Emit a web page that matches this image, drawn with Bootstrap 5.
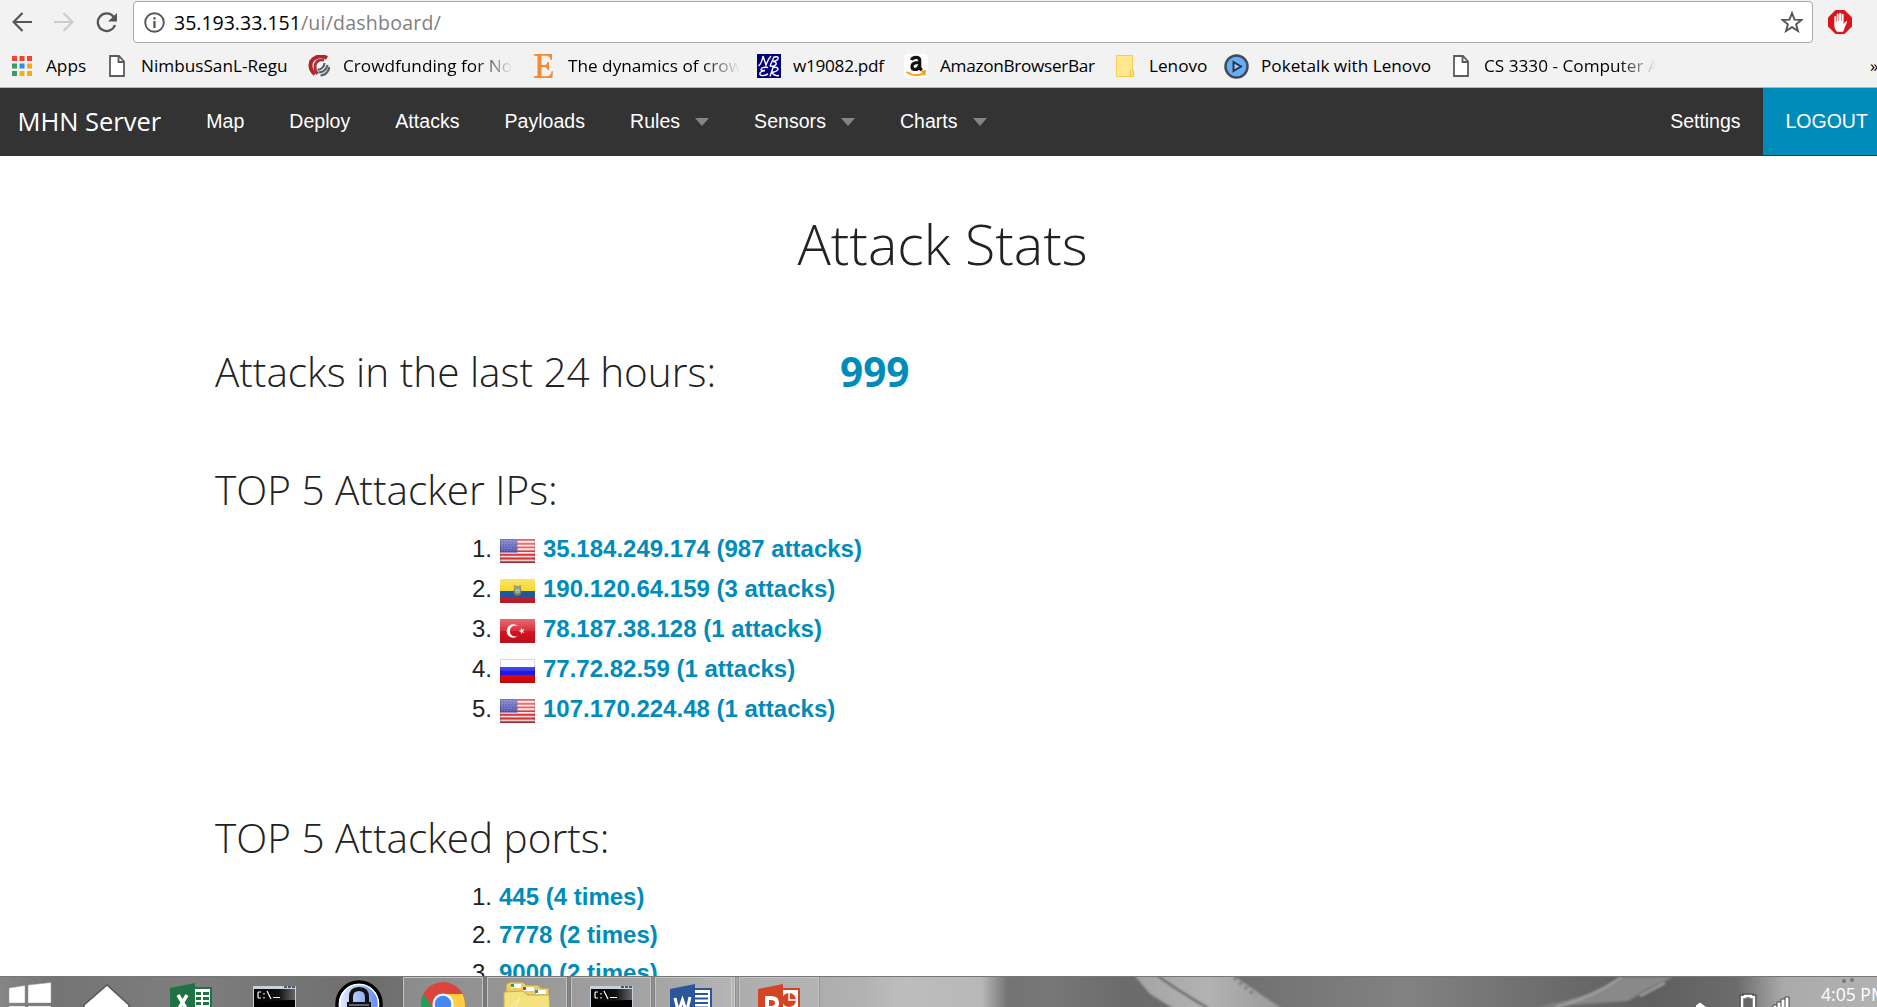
<!DOCTYPE html>
<html lang="en">
<head>
<meta charset="utf-8">
<title>MHN Server</title>
<link href="https://cdn.jsdelivr.net/npm/bootstrap@5.3.0/dist/css/bootstrap.min.css" rel="stylesheet">
<style>
body{height:1007px;font-family:"Liberation Sans",Arial,sans-serif;color:#222;background:#fff}
svg{display:block;flex:none}
.chrome-ui{height:88px;background:#f2f2f2;border-bottom:1px solid #b3b6b3;font-family:"Open Sans",sans-serif;color:#000}
.address-row{height:45px;padding:1px 0 2px 12px}
.omnibox{width:1680px;height:42px;margin-left:16px;border:1px solid #a9a9a9;border-radius:4px;background:#fff;padding:0 9px 0 10px;font-size:19.5px}
.omnibox .url{margin-left:9px;padding-top:1px}
.omnibox .path{color:#808080;letter-spacing:.25px}
.nav-ic{margin-left:22px}
.stop-ic{margin-left:15px}
.bm-row{height:42px;padding-left:12px;font-size:17.2px}
.bm{display:flex;align-items:center;height:42px;white-space:nowrap;flex:none}
.bm svg{margin-right:var(--g,12px)}
.bm.tight{letter-spacing:-.3px}
.fade-end{overflow:hidden;-webkit-mask-image:linear-gradient(90deg,#000 calc(100% - 38px),transparent);mask-image:linear-gradient(90deg,#000 calc(100% - 38px),transparent)}
.topbar{height:68px;background:#333;font-size:19.5px;padding:0}
.topbar a{color:#fff;text-decoration:none;line-height:67px;height:67px;padding:0 22.5px;letter-spacing:.04px}
.topbar .brand{font:25.5px/67px "Open Sans",sans-serif;padding:0 22.5px 0 17.5px;letter-spacing:0}
.topbar .has-menu{display:flex;align-items:center;padding-right:22.5px}
.has-menu::after{content:"";border:7.5px solid transparent;border-top:8px solid #858585;border-bottom:0;margin-left:15px}
.topbar .set{letter-spacing:-.02px}
.topbar .logout{background:#008cba;width:114px;letter-spacing:0}
.page{overflow:hidden;min-height:0}
.page h1,.page h3{font-family:"Open Sans",sans-serif;font-weight:300;color:#222;margin:0;white-space:nowrap}
.page h1{font-size:55.5px;line-height:70px;padding:53px 0 0 8px}
.page h3{font-size:40.5px;line-height:56px}
.page a{color:#008cba;font-weight:700;text-decoration:none}
.inner{width:1500px;padding-left:215px}
.total-row{padding-top:65px}
.total-row h3{width:625px}
.total{font:700 40.5px/56px "Open Sans",sans-serif;color:#008cba}
.ips-head{padding-top:62px}
.ports-head{padding-top:81px}
ol.stat{list-style:none;padding:11px 0 0;margin:0 0 0 257px;font-size:24px}
ol.stat li{display:flex;align-items:center;line-height:40px;height:40px}
ol.stat li svg{margin:4px 8px 0 0}
ol.stat.ports{padding-top:12px}
ol.stat.ports li{height:38px;line-height:38px}
.num{width:21px;margin-right:7px;white-space:nowrap}
.ports .num{margin-right:6px}
.taskbar{height:31px;overflow:hidden;position:relative;border-top:1px solid #777;background:#777}
.wall{position:absolute;inset:0}
.tasks{position:relative;height:60px}
.task{width:80px;height:60px;margin-right:4px;border:1px solid #c4c4c4;box-shadow:0 0 0 1px #6665;background:#ffffff30;display:flex;justify-content:center}
.task.stacked{border-right:4px double #ccc;padding-right:4px}
.task.lit{background:#ffffff18}
.tray{position:relative;color:#fff;font:17.6px/26px "Open Sans",sans-serif}
.clock{width:56px;padding-top:4px}
</style>
<script src="https://cdn.jsdelivr.net/npm/bootstrap@5.3.0/dist/js/bootstrap.bundle.min.js"></script>
</head>
<body class="d-flex flex-column overflow-hidden">
<svg width="0" height="0" class="position-absolute">
<defs>
<linearGradient id="gloss" x2="0" y2="1"><stop stop-color="#fff" stop-opacity=".38"/><stop offset=".5" stop-color="#fff" stop-opacity=".12"/><stop offset=".52" stop-color="#000" stop-opacity="0"/><stop offset="1" stop-color="#000" stop-opacity=".14"/></linearGradient>
<linearGradient id="cmdg" x2="1" y2="0"><stop stop-color="#000"/><stop offset=".6" stop-color="#111"/><stop offset="1" stop-color="#666"/></linearGradient>
<symbol id="us" viewBox="0 0 35 24"><path fill="#f8e8e8" d="M0 0h35v24H0z"/><path stroke="#e2393e" stroke-width="1.9" d="M0 1h35M0 4.7h35M0 8.4h35M0 12.1h35M0 15.8h35M0 19.5h35M0 23.1h35"/><path fill="#4646a8" d="M0 0h17.5v13.5H0z"/><path stroke="#7676c0" stroke-width="1" stroke-dasharray="1 2" d="M1 2h16M2 4.5h15M1 7h16M2 9.500h15M1 12h16"/><path fill="url(#gloss)" d="M0 0h35v24H0z"/><path fill="none" stroke="#0002" d="M.5.5h34v23H.5z"/></symbol>
<symbol id="page-i" viewBox="0 0 16 22"><path fill="#fff" stroke="#5c5c5c" stroke-width="1.8" d="M1 1h9l5 5.500V21H1zM9.500 1v6H15"/></symbol>
<symbol id="cmd" viewBox="0 0 43 30"><path fill="#c9d2dc" d="M0 0h43v30H0z"/><path fill="#4b5b6c" d="M31 0h3v2h-3zM35 0h3v2h-3zM39 0h3v2h-3z"/><path fill="url(#cmdg)" d="M1 3h41v27H1z"/><path fill="#000" d="M1 30V21Q16 13 42 14v16z"/><path fill="none" stroke="#fff" stroke-width="1.200" d="M8 6H5.500L5 7v4l.5 1H8M11 7v1.500M11 11v1.500M14 5l4 8M20 11.500h7"/></symbol>
</defs></svg>

<header class="chrome-ui flex-shrink-0">
 <div class="address-row d-flex align-items-center">
  <svg width="20" height="20" viewBox="0 0 20 20" fill="none" stroke="#555" stroke-width="2.2"><path d="M20 10H2M10.500 1L1.600 10l8.900 9"/></svg>
  <svg class="nav-ic" width="20" height="20" viewBox="0 0 20 20" fill="none" stroke="#ccc" stroke-width="2.2"><path d="M0 10h18M9.500 1l8.900 9-8.900 9"/></svg>
  <svg class="nav-ic" width="21" height="21" viewBox="0 0 21 21"><path fill="none" stroke="#555" stroke-width="2.300" d="M17.600 4.800A8.800 8.800 0 1 0 19 13"/><path fill="#555" d="M21 1v8.500h-9z"/></svg>
  <div class="omnibox d-flex align-items-center">
   <svg width="21" height="21" viewBox="0 0 21 21"><circle cx="10.500" cy="10.500" r="9.300" fill="none" stroke="#555" stroke-width="1.900"/><path fill="#555" d="M9.300 5.200h2.300v2.300H9.300zM9.300 9h2.300v7H9.300z"/></svg>
   <span class="url flex-grow-1">35.193.33.151<span class="path">/ui/dashboard/</span></span>
   <svg width="22" height="22" viewBox="0 0 22 22"><path fill="none" stroke="#555" stroke-width="1.900" d="M11 2.200l2.500 6.500 7 .3-5.400 4.300 1.900 6.700-6-3.800L5 20l1.900-6.700L1.500 9l7-.3z"/></svg>
  </div>
  <svg class="stop-ic" width="24" height="24" viewBox="0 0 24 24"><path fill="#d8171c" d="M7.500 0h9L24 7.500v9L16.500 24h-9L0 16.500v-9z"/><path fill="#fff" d="M6.300 6.500q1-1.200 1.900 0V12h.5V4.200q1-1.200 1.900 0V11h.5V3.200q1-1 2 0V11h.5V4.200q1-1 2 0V14l2.600-3q1.300.2.800 1.200L16.500 18q-.5 2.500-1.500 3.700H9Q6.500 19 6.300 16z"/></svg>
 </div>
 <nav class="bm-row d-flex align-items-center">
  <span class="bm" style="width:97px;--g:14px"><svg width="20" height="20" viewBox="0 0 20 20"><path fill="#f44336" d="M0 0h5v5H0zM7.500 0h5v5h-5zM15 0h5v5h-5z"/><path fill="#34a05f" d="M0 7.500h5v5H0zM0 15h5v5H0z"/><path fill="#2a8cf0" d="M7.500 7.500h5v5h-5z"/><path fill="#fbab10" d="M15 7.500h5v5h-5zM7.500 15h5v5h-5zM15 15h5v5h-5z"/></svg>Apps</span>
  <span class="bm" style="width:199px;--g:16px"><svg width="16" height="22"><use href="#page-i"/></svg>NimbusSanL-Regu</span>
  <span class="bm" style="width:224px;--g:13px"><svg width="22" height="22" viewBox="0 0 22 22"><g fill="none"><path stroke="#b3252c" stroke-width="4" d="M19 3C12-1 2 3 2.500 11q.3 5 4.500 8"/><path stroke="#a43238" stroke-width="2.800" d="M16 5Q8 4 7 11q-.3 5 2.500 8"/><path stroke="#59636a" stroke-width="2.200" d="M16.500 8q-.5 6-7 7M19.500 10q-1.500 7-9 7.500M21.500 12q-2 8-9 8.500"/></g></svg><span class="fade-end" style="width:170px">Crowdfunding for No</span></span>
  <span class="bm" style="width:225px"><svg width="24" height="24" viewBox="0 0 24 24"><path fill="#f58a36" d="M2 0h18v6h-1.500Q18 2 15 1.700H9.500V11h3q2.500 0 3-3H17v8h-1.500q-.5-3-3-3h-3v9.200H15q4-.2 4.500-5H21L20.300 24H2v-1.500l3.500-.7V2.200L2 1.500z"/></svg><span class="fade-end" style="width:172px">The dynamics of crow</span></span>
  <span class="bm tight" style="width:147px"><svg width="24" height="24" viewBox="0 0 24 24"><path fill="#000080" d="M0 0h24v24H0z"/><path fill="none" stroke="#fff" stroke-width="1.400" d="M1.500 12Q5 9 6 2l3 9q2-6 5-9M13 12l4-9q5-1 4 2-1 2-5 2.500 4 .5 3 3-2 2.500-6 1.500M11 13.500q-6-1-7 2 0 1.500 4 1-6 1-5 4 2 2.500 8-.5M13 22.500l3-9q5-1 5 2-1 2-6 3 2 4 7 3"/></svg>w19082.pdf</span>
  <span class="bm tight" style="width:212px"><svg width="24" height="24" viewBox="0 0 24 24"><rect width="24" height="24" rx="4" fill="#fff"/><path fill="none" stroke="#111" stroke-width="3.200" d="M7.500 6q1-2.600 4.500-2.600 3.700 0 3.700 3v7.500l2 2.300M15.500 8.500q-7.500-.2-7.500 4 0 3 3 3 3.500 0 4.500-4"/><path fill="none" stroke="#f90" stroke-width="1.800" d="M2.500 18q9 6 18 .8M17 17.500l4-.3-.8 4"/></svg>AmazonBrowserBar</span>
  <span class="bm" style="width:108px;--g:15px"><svg width="18" height="22" viewBox="0 0 18 22"><path fill="#ffe78f" stroke="#f5cf55" d="M.5.5h16v21H.5z"/><path fill="#ffe17a" stroke="#f0c440" d="M14.500 21.500v-6q3-2 3 1v5z"/></svg>Lenovo</span>
  <span class="bm" style="width:229px"><svg width="25" height="25" viewBox="0 0 25 25"><circle cx="12.500" cy="12.500" r="11" fill="#68adf5" stroke="#3e4c5e" stroke-width="2.500"/><path fill="#9bceff" stroke="#26364a" stroke-width="2" d="M9.500 8l7.500 4.500L9.500 17z"/></svg>Poketalk with Lenovo</span>
  <span class="bm" style="width:417px;--g:15px"><svg width="16" height="22"><use href="#page-i"/></svg><span class="fade-end" style="width:172px">CS 3330 - Computer A</span></span>
  <span class="bm">»</span>
 </nav>
</header>

<nav class="topbar d-flex flex-nowrap flex-shrink-0">
 <a class="brand" href="#">MHN Server</a><a href="#">Map</a><a href="#">Deploy</a><a href="#">Attacks</a><a href="#">Payloads</a><a class="has-menu" href="#">Rules</a><a class="has-menu" href="#">Sensors</a><a class="has-menu" href="#">Charts</a><a class="set ms-auto" href="#">Settings</a><a class="logout" href="#">LOGOUT</a>
</nav>

<main class="page flex-grow-1">
 <h1 class="text-center">Attack Stats</h1>
 <div class="inner">
  <div class="total-row d-flex"><h3>Attacks in the last 24 hours:</h3><span class="total">999</span></div>
  <h3 class="ips-head">TOP 5 Attacker IPs:</h3>
  <ol class="stat">
   <li><span class="num">1.</span><svg width="35" height="24"><use href="#us"/></svg><a href="#">35.184.249.174 (987 attacks)</a></li>
   <li><span class="num">2.</span><svg width="35" height="24" viewBox="0 0 35 24"><path fill="#f5d410" d="M0 0h35v12H0z"/><path fill="#1f5aa5" d="M0 12h35v6H0z"/><path fill="#d21f2b" d="M0 18h35v6H0z"/><path fill="#8c8142" d="M14 6l3.500 1L21 6v3l.5 3-1 4-3 1-3-1-1-4 .5-3z"/><circle cx="17.500" cy="12" r="2.500" fill="#8ab7c0"/><path fill="url(#gloss)" d="M0 0h35v24H0z"/></svg><a href="#">190.120.64.159 (3 attacks)</a></li>
   <li><span class="num">3.</span><svg width="35" height="24" viewBox="0 0 35 24"><path fill="#d8121f" d="M0 0h35v24H0z"/><path fill="url(#gloss)" d="M0 0h35v24H0z"/><path fill="#fff" d="M18 7a6.800 6.800 0 1 0 0 10 5.600 5.600 0 1 1 0-10z"/><path fill="#fff" d="M18.500 12l2.300-.8.100-2.400 1.400 1.900 2.200-.7-1.400 2 1.400 2-2.200-.7-1.400 1.900-.1-2.400z"/></svg><a href="#">78.187.38.128 (1 attacks)</a></li>
   <li><span class="num">4.</span><svg width="35" height="24" viewBox="0 0 35 24"><path fill="#fafafa" d="M0 0h35v8H0z"/><path fill="#1b1be6" d="M0 8h35v8H0z"/><path fill="#ea0808" d="M0 16h35v8H0z"/><path fill="url(#gloss)" d="M0 0h35v24H0z"/><path fill="none" stroke="#0002" d="M.5.5h34v23H.5z"/></svg><a href="#">77.72.82.59 (1 attacks)</a></li>
   <li><span class="num">5.</span><svg width="35" height="24"><use href="#us"/></svg><a href="#">107.170.224.48 (1 attacks)</a></li>
  </ol>
  <h3 class="ports-head">TOP 5 Attacked ports:</h3>
  <ol class="stat ports">
   <li><span class="num">1.</span><a href="#">445 (4 times)</a></li>
   <li><span class="num">2.</span><a href="#">7778 (2 times)</a></li>
   <li><span class="num">3.</span><a href="#">9000 (2 times)</a></li>
  </ol>
 </div>
</main>

<footer class="taskbar flex-shrink-0 d-flex">
 <svg class="wall" width="1877" height="31" viewBox="0 0 1877 31">
  <defs>
  <linearGradient id="wg" gradientUnits="userSpaceOnUse" x1="0" x2="1877" y1="0" y2="0"><stop stop-color="#858585"/><stop offset=".03" stop-color="#747474"/><stop offset=".1" stop-color="#7e7e7e"/><stop offset=".2" stop-color="#6e6e6e"/><stop offset=".26" stop-color="#7b7b7b"/><stop offset=".35" stop-color="#909090"/><stop offset=".39" stop-color="#a4a4a4"/><stop offset=".46" stop-color="#b2b2b2"/><stop offset=".48" stop-color="#bdbdbd"/><stop offset=".523" stop-color="#b8b8b8"/><stop offset=".537" stop-color="#737373"/><stop offset=".56" stop-color="#777"/><stop offset=".6" stop-color="#6b6b6b"/><stop offset=".66" stop-color="#707070"/><stop offset=".75" stop-color="#828282"/><stop offset=".83" stop-color="#6b6b6b"/><stop offset=".88" stop-color="#5f5f5f"/><stop offset=".925" stop-color="#6b6b6b"/><stop offset=".95" stop-color="#aaa"/><stop offset="1" stop-color="#b2b2b2"/></linearGradient>
  <linearGradient id="feather" gradientUnits="userSpaceOnUse" x1="1134" x2="1285" y1="0" y2="0"><stop stop-color="#a4a4a4"/><stop offset=".5" stop-color="#b2b2b2"/><stop offset="1" stop-color="#999"/></linearGradient>
  <filter id="soft" filterUnits="userSpaceOnUse" x="1100" y="-10" width="650" height="50" color-interpolation-filters="sRGB"><feGaussianBlur stdDeviation=".8"/></filter>
  </defs>
  <path fill="url(#wg)" d="M0 0h1877v31H0z"/>
  <g filter="url(#soft)"><path fill="url(#feather)" d="M1134-2L1233-2 1250 10 1284 33 1176 33 1150 17z"/><path fill="none" stroke="#5c5c5c" stroke-width="1.800" d="M1158-1q22 16 50 32"/><path fill="#898989" d="M1530 31q60-9 90-31h54l-26 12-20 12z"/><path stroke="#aaa" stroke-width="2" fill="none" d="M1555 31q40-12 66-31M1640 19l25-13"/><path stroke="#777" stroke-width="3" stroke-dasharray="3 4" fill="none" d="M1234 1l22 18"/></g>
  <circle cx="1844" cy="4" r="2" fill="#777"/><circle cx="1852" cy="3" r="2" fill="#777"/>
 </svg>
 <div class="tasks d-flex flex-grow-1">
  <svg width="403" height="31" viewBox="0 0 403 31">
   <defs><linearGradient id="kp"><stop stop-color="#eef3ff"/><stop offset="1" stop-color="#5a84ea"/></linearGradient></defs>
   <path fill="#fff" stroke="#999" stroke-width=".5" d="M9 11l16-2.500V26H9zM28 8l23-2.500V26H28zM9 29h16v9H9zM28 29h23v9H28z"/>
   <path fill="#fff" stroke="#555" stroke-width="1.500" d="M84 31v-3l23-20 22 20v3z"/>
   <path fill="#fff" stroke="#1f7244" stroke-width="2" d="M190 11h21v24h-21z"/><path fill="#1f7244" d="M196 15h5v3h-5zM203 15h6v3h-6zM196 20h5v3h-5zM203 20h6v3h-6zM196 25h5v3h-5zM203 25h6v3h-6zM170 11l25-5v25h-25z"/><path fill="none" stroke="#fff" stroke-width="3.500" d="M178 18l9 15M187 18l-9 15"/>
   <svg x="253" y="9" width="43" height="30"><use href="#cmd"/></svg>
   <circle cx="359" cy="27" r="22" fill="url(#kp)" stroke="#000" stroke-width="3.500"/><circle cx="359" cy="27" r="19.500" fill="none" stroke="#fff" stroke-width="1.500"/><path fill="none" stroke="#111" stroke-width="4" d="M351 27v-7q0-8 8-8t8 8v7"/><path fill="#111" d="M347 25h24v6h-24z"/><path stroke="#9ab4f0" d="M349 28h20"/>
  </svg>
  <div class="task"><svg width="44" height="46" viewBox="0 0 44 46" style="margin-top:4px"><circle cx="22" cy="22" r="22" fill="#dc453b"/><path fill="#1fa15d" d="M2.500 12L15 31l-2 13Q0 38 0 22 0 16 2.500 12z"/><path fill="#ffce44" d="M22 12h19.600Q44 17 44 22q0 16-14 22L22 34z"/><circle cx="22" cy="22" r="10.500" fill="#fff"/><circle cx="22" cy="22" r="8.300" fill="#4688f1"/></svg></div>
  <div class="task"><svg width="48" height="31" viewBox="0 0 48 31" style="margin-top:3px"><path fill="#e8cd69" stroke="#a9975c" d="M3 31V3l4-2h13l3 3h12l3 3h8v24z"/><path fill="#fff" d="M8 3h10v4H8zM20 6h11v4H20zM33 9h10v4H33z"/><path fill="#2aa052" d="M8 3h3v3H8z"/><path fill="#d83a24" d="M20 6h3v3h-3z"/><path fill="#2c8ed8" d="M32 9h3v3h-3z"/><path fill="#f4e27e" stroke="#c6ac4c" d="M1 31V11l19-1 4 4h22l1 17z"/><path stroke="#fff8" d="M4 31l10-12M10 31l7-14"/></svg></div>
  <div class="task"><svg width="43" height="30" style="margin-top:8px"><use href="#cmd"/></svg></div>
  <div class="task stacked"><svg width="43" height="32" viewBox="0 0 43 32" style="margin-top:5px"><path fill="#fff" stroke="#2b579a" stroke-width="2" d="M20 6h21v28H20z"/><path stroke="#2b579a" stroke-width="2" d="M24 11h14M24 15.500h14M24 20h14M24 24.500h14"/><path fill="#2b579a" d="M0 6l25-5v33H0z"/><path fill="none" stroke="#fff" stroke-width="3" d="M5 15l3.500 14 4-12 4 12L20 14"/></svg></div>
  <div class="task lit"><svg width="43" height="32" viewBox="0 0 43 32" style="margin-top:5px"><path fill="#fff" stroke="#d24625" stroke-width="2" d="M20 6h21v28H20z"/><circle cx="31" cy="17" r="7" fill="#d24625"/><path stroke="#fff" stroke-width="1.500" fill="none" d="M31 9v8h8M24 27h14"/><path fill="#d24625" d="M0 6l25-5v33H0z"/><path fill="none" stroke="#fff" stroke-width="4" d="M9 34V15h4q6 0 6 5t-6 5H9"/></svg></div>
 </div>
 <div class="tray d-flex align-items-start">
  <svg width="125" height="31" viewBox="0 0 125 31"><path fill="#fff" stroke="#666" d="M-4 31l8-6 8 6z"/><path fill="#666" stroke="#444" stroke-width="5" d="M46 32V20h3v-1h6v1h3v12z"/><path fill="#666" stroke="#fff" stroke-width="2.500" d="M46 32V20h3v-1h6v1h3v12z"/><path fill="#fff" stroke="#444" stroke-width="1" d="M77 32v-4h4v-3h4v-3h4v-2h4v12z"/><path stroke="#444" d="M81 28v4M85 25v7M89 22v10"/></svg>
  <span class="clock text-nowrap overflow-hidden">4:05 PM</span>
 </div>
</footer>
</body>
</html>
